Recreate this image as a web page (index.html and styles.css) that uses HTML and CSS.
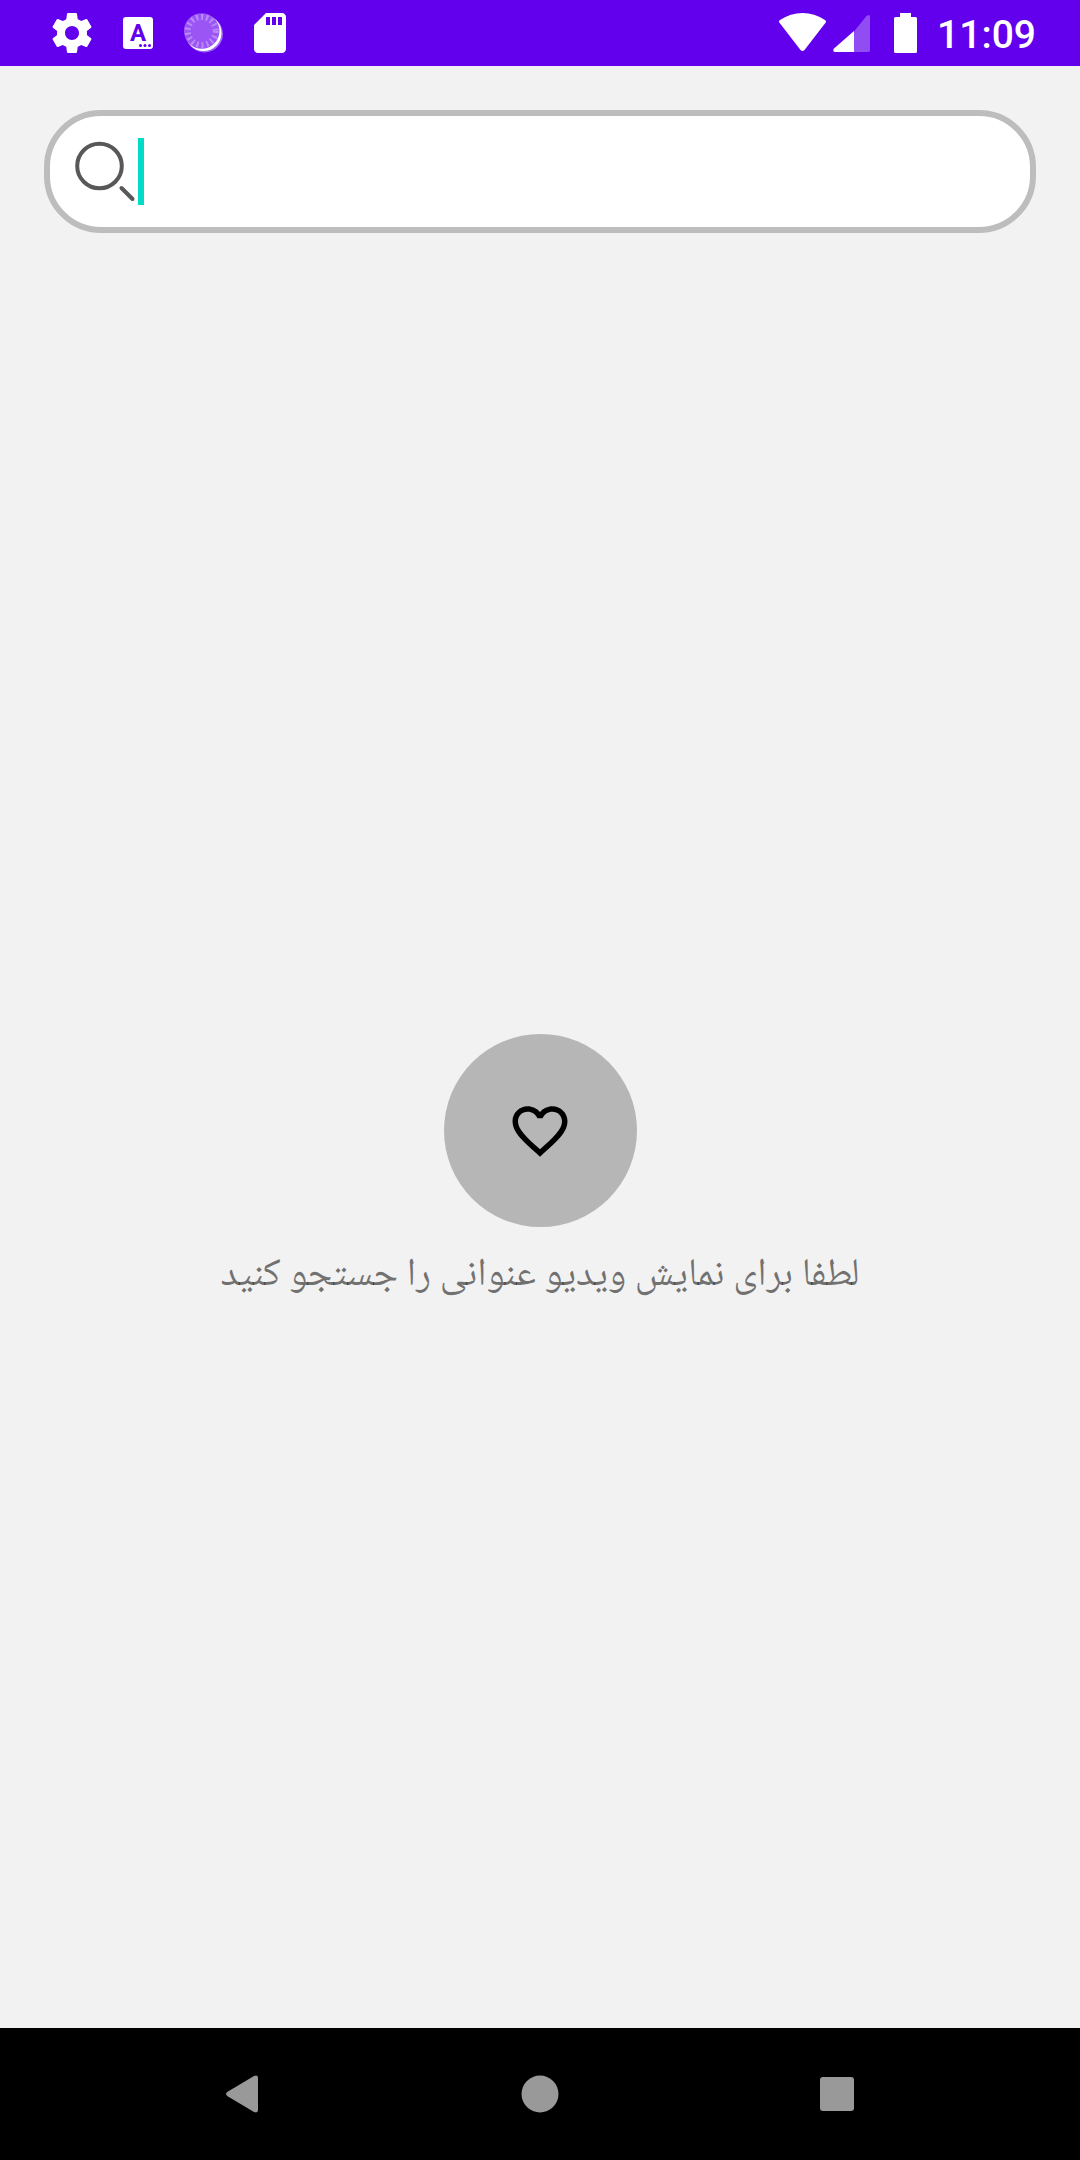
FILE: index.html
```html
<!DOCTYPE html>
<html lang="fa">
<head>
<meta charset="utf-8">
<meta name="viewport" content="width=device-width, initial-scale=1">
<title>جستجو</title>
<link rel="stylesheet" href="styles.css">
</head>
<body>
<header class="status-bar">
  <div class="status-group status-notifications">
    <svg class="status-icon" viewBox="0 0 24 24" aria-hidden="true"><path d="M19.43 12.98c.04-.32.07-.64.07-.98s-.03-.66-.07-.98l2.11-1.65c.19-.15.24-.42.12-.64l-2-3.46c-.12-.22-.39-.3-.61-.22l-2.49 1c-.52-.4-1.08-.73-1.69-.98l-.38-2.65C14.46 2.18 14.25 2 14 2h-4c-.25 0-.46.18-.49.42l-.38 2.65c-.61.25-1.17.59-1.69.98l-2.49-1c-.23-.09-.49 0-.61.22l-2 3.46c-.13.22-.07.49.12.64l2.11 1.65c-.04.32-.07.65-.07.98s.03.66.07.98l-2.11 1.65c-.19.15-.24.42-.12.64l2 3.46c.12.22.39.3.61.22l2.49-1c.52.4 1.08.73 1.69.98l.38 2.65c.03.24.24.42.49.42h4c.25 0 .46-.18.49-.42l.38-2.65c.61-.25 1.17-.59 1.69-.98l2.49 1c.23.09.49 0 .61-.22l2-3.46c.12-.22.07-.49-.12-.64l-2.11-1.65zM12 15.5c-1.93 0-3.5-1.57-3.5-3.5s1.57-3.5 3.5-3.5 3.5 1.57 3.5 3.5-1.57 3.5-3.5 3.5z"/></svg>
    <svg class="status-icon" viewBox="0 0 48 48" aria-hidden="true">
      <rect x="9" y="8" width="30" height="32" rx="3"/>
      <text class="icon-letter" x="24" y="32">A</text>
      <g class="icon-cut"><circle cx="26.500" cy="36.500" r="1.500"/><circle cx="31" cy="36.500" r="1.500"/><circle cx="35.500" cy="36.500" r="1.500"/></g>
    </svg>
    <svg class="status-icon" viewBox="0 0 48 48" aria-hidden="true">
      <circle cx="24.500" cy="25" r="18.500" opacity=".4"/>
      <circle cx="23.500" cy="24" r="18"/>
      <circle class="spinner-face" cx="21.700" cy="22" r="17.800"/>
      <circle class="spinner-ticks" cx="21.700" cy="22" r="14"/>
    </svg>
    <svg class="status-icon" viewBox="0 0 24 24" aria-hidden="true"><path d="M18 2h-8L4.020 8 4 20c0 1.100.9 2 2 2h12c1.100 0 2-.9 2-2V4c0-1.100-.9-2-2-2zm-6 6h-2V4h2v4zm3 0h-2V4h2v4zm3 0h-2V4h2v4z"/></svg>
  </div>
  <div class="status-group status-system">
    <svg class="status-icon" viewBox="0 0 48 48" aria-hidden="true"><path d="M.3 13.500Q-.5 12 1 11C8 6.500 15.500 4 23.500 4S39 6.500 46 11Q47.500 12 46.700 13.500L25.500 41Q23.500 43 21.500 41Z"/></svg>
    <svg class="status-icon" viewBox="0 0 48 48" aria-hidden="true">
      <path opacity=".3" d="M23 22.500 35.500 7Q39 4.500 39 8V41Q39 43 37 43H23Z"/>
      <path d="M23 22V43H4Q1 42.500 3 39.500Z"/>
    </svg>
    <svg class="status-icon" viewBox="0 0 48 48" aria-hidden="true"><path d="M17 4H28V8H32.500Q34 8 34 9.500V42.500Q34 44 32.500 44H12.500Q11 44 11 42.500V9.500Q11 8 12.500 8H17Z"/></svg>
    <time class="clock" datetime="11:09">11:09</time>
  </div>
</header>

<main class="screen">
  <label class="search-box">
    <svg class="search-icon" viewBox="0 0 64 64" aria-hidden="true"><circle cx="25.500" cy="26" r="22.300"/><path d="M47.500 48 58.500 59"/></svg>
    <span class="caret"></span>
    <input class="search-input" type="text" aria-label="جستجو" dir="auto">
  </label>

  <section class="empty-state">
    <div class="empty-badge">
      <svg class="heart-icon" viewBox="0 0 24 24" aria-hidden="true"><path d="M16.500 3c-1.740 0-3.410.81-4.500 2.090C10.910 3.810 9.240 3 7.500 3 4.420 3 2 5.420 2 8.500c0 3.780 3.400 6.860 8.550 11.540L12 21.350l1.450-1.320C18.600 15.360 22 12.280 22 8.500 22 5.420 19.580 3 16.500 3zm-4.400 15.550l-.1.1-.1-.1C7.140 14.240 4 11.390 4 8.500 4 6.500 5.500 5 7.500 5c1.540 0 3.040.99 3.570 2.360h1.870C13.460 5.990 14.960 5 16.500 5c2 0 3.500 1.500 3.500 3.500 0 2.890-3.140 5.740-7.900 10.050z"/></svg>
    </div>
    <p class="empty-text" dir="rtl">لطفا برای نمایش ویدیو عنوانی را جستجو کنید</p>
  </section>
</main>

<nav class="nav-bar">
  <button class="nav-button" type="button" aria-label="Back"><svg class="nav-icon" viewBox="0 0 48 48" aria-hidden="true"><path d="M9 21.500 35 6Q39 4.500 39 8V40Q39 43.500 35 42L9 26.500Q5 24 9 21.500Z"/></svg></button>
  <button class="nav-button" type="button" aria-label="Home"><svg class="nav-icon" viewBox="0 0 48 48" aria-hidden="true"><circle cx="24" cy="24" r="18.500"/></svg></button>
  <button class="nav-button" type="button" aria-label="Overview"><svg class="nav-icon" viewBox="0 0 48 48" aria-hidden="true"><rect x="7" y="7" width="34" height="34" rx="3"/></svg></button>
</nav>
</body>
</html>
```
FILE: styles.css
```css
* {
  box-sizing: border-box;
}

body {
  display: flex;
  flex-direction: column;
  min-height: 100vh;
  margin: 0;
  background: #f2f2f2;
  font-family: Roboto, "Noto Sans", sans-serif;
}

.status-bar {
  display: flex;
  align-items: center;
  justify-content: space-between;
  height: 66px;
  padding: 0 44px 0 48px;
  background: #6200ee;
  color: #fff;
}

.status-group {
  display: flex;
  align-items: center;
}

.status-notifications {
  gap: 18px;
}

.status-system {
  gap: 4px;
}

.status-icon {
  width: 48px;
  height: 48px;
  fill: #fff;
}

.icon-letter {
  fill: #6200ee;
  font-size: 24px;
  font-weight: 700;
  text-anchor: middle;
}

.icon-cut {
  fill: #6200ee;
}

.spinner-face {
  fill: #9a55f4;
}

.spinner-ticks {
  fill: none;
  stroke: #b98af8;
  stroke-width: 6;
  stroke-dasharray: 2 3;
}

.clock {
  padding: 3px 0 0 2px;
  font-size: 39px;
  font-weight: 500;
  line-height: 48px;
}

.screen {
  display: flex;
  flex: 1;
  flex-direction: column;
  padding-top: 44px;
}

.search-box {
  display: flex;
  align-items: center;
  height: 123px;
  margin: 0 44px;
  padding: 0 24px;
  border: 6px solid #bdbdbd;
  border-radius: 57px;
  background: #fff;
}

.search-icon {
  width: 64px;
  height: 64px;
  fill: none;
  stroke: #585858;
  stroke-linecap: round;
  stroke-width: 4;
}

.caret {
  width: 6px;
  height: 67px;
  background: #00dcc8;
}

.search-input {
  flex: 1;
  min-width: 0;
  height: 67px;
  padding: 0;
  border: 0;
  outline: 0;
  background: transparent;
  color: #212121;
  font: inherit;
  font-size: 40px;
}

.empty-state {
  display: grid;
  flex: 1;
  grid-template-rows: 1fr auto 1fr;
  justify-items: center;
}

.empty-badge {
  display: flex;
  grid-row: 2;
  align-items: center;
  justify-content: center;
  width: 193px;
  height: 193px;
  border-radius: 50%;
  background: #b6b6b6;
}

.heart-icon {
  width: 66px;
  height: 66px;
}

.empty-text {
  grid-row: 3;
  margin: 16px 24px 0;
  color: rgba(0, 0, 0, 0.54);
  font-family: "Noto Naskh Arabic UI", "Noto Naskh Arabic", "DejaVu Sans", sans-serif;
  font-size: 39px;
  line-height: 64px;
}

.nav-bar {
  display: flex;
  height: 132px;
  padding: 0 94px;
  background: #000;
}

.nav-button {
  display: flex;
  flex: 1;
  align-items: center;
  justify-content: center;
  padding: 0;
  border: 0;
  background: transparent;
}

.nav-icon {
  width: 48px;
  height: 48px;
  fill: #999;
}
```
